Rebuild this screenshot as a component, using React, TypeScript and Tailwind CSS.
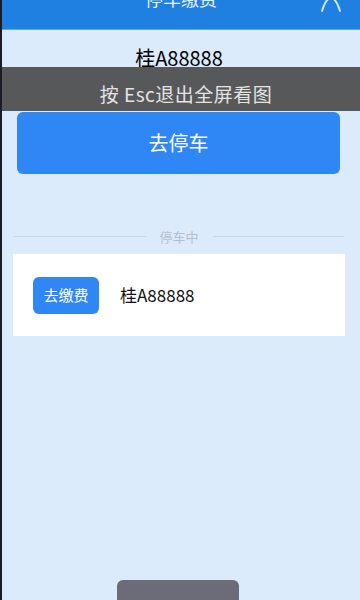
export default function App() {
  const font = { fontFamily: '"Noto Sans CJK SC", "Noto Sans", sans-serif' };

  return (
    <div
      className="relative w-[360px] h-[600px] overflow-hidden bg-[#dcebfb] border-l-2 border-[#1b1d26]"
      style={font}
    >
      {/* Header */}
      <div className="relative h-[30px] bg-[#1f80e2] border-b border-[#62a6ec] flex justify-center overflow-hidden">
        <span className="-mt-[14px] text-[18px] leading-[24px] text-[#e8f2fd]">停车缴费</span>
        <svg
          className="absolute right-[16px] -top-[4px]"
          width="26"
          height="18"
          viewBox="0 0 26 18"
          fill="none"
          stroke="#cfe6fb"
          strokeWidth="2"
          strokeLinecap="round"
        >
          <path d="M4 15 Q8 2 13 2 Q18 2 22 15" />
        </svg>
      </div>

      {/* Plate */}
      <div className="pt-[14px] pr-[4px] text-center text-[20px] leading-[28px] text-black">桂A88888</div>

      {/* Park button */}
      <div className="mt-[40px] ml-[15px] mr-[20px]">
        <button className="w-full h-[62px] rounded-md bg-[#2f86f5] text-white text-[20px]">去停车</button>
      </div>

      {/* Divider */}
      <div className="mt-[55px] ml-[12px] mr-[16px] h-[14px] flex items-center gap-[14px]">
        <div className="flex-1 h-px bg-[#c9d8e9]" />
        <span className="text-[13px] leading-none text-[#b3c0cf]">停车中</span>
        <div className="flex-1 h-px bg-[#c9d8e9]" />
      </div>

      {/* Parking card */}
      <div className="mt-[11px] ml-[11px] mr-[15px] h-[82px] bg-white flex items-center px-[20px] gap-[21px]">
        <button className="w-[66px] h-[37px] rounded-md bg-[#2f86f5] text-white text-[15px]">去缴费</button>
        <span className="text-[17px] text-[#111]">桂A88888</span>
      </div>

      {/* Fullscreen hint overlay */}
      <div className="absolute left-0 right-0 top-[67px] h-[44px] bg-[#56585a] flex justify-center pt-[15px] pl-[10px]">
        <span className="text-[19px] leading-[24px] tracking-[0.5px] text-[#e4e4e4]">按 Esc退出全屏看图</span>
      </div>

      {/* Bottom tab */}
      <div className="absolute bottom-0 left-[115px] w-[122px] h-[20px] rounded-t-md bg-[#6b6c78]" />
    </div>
  );
}
